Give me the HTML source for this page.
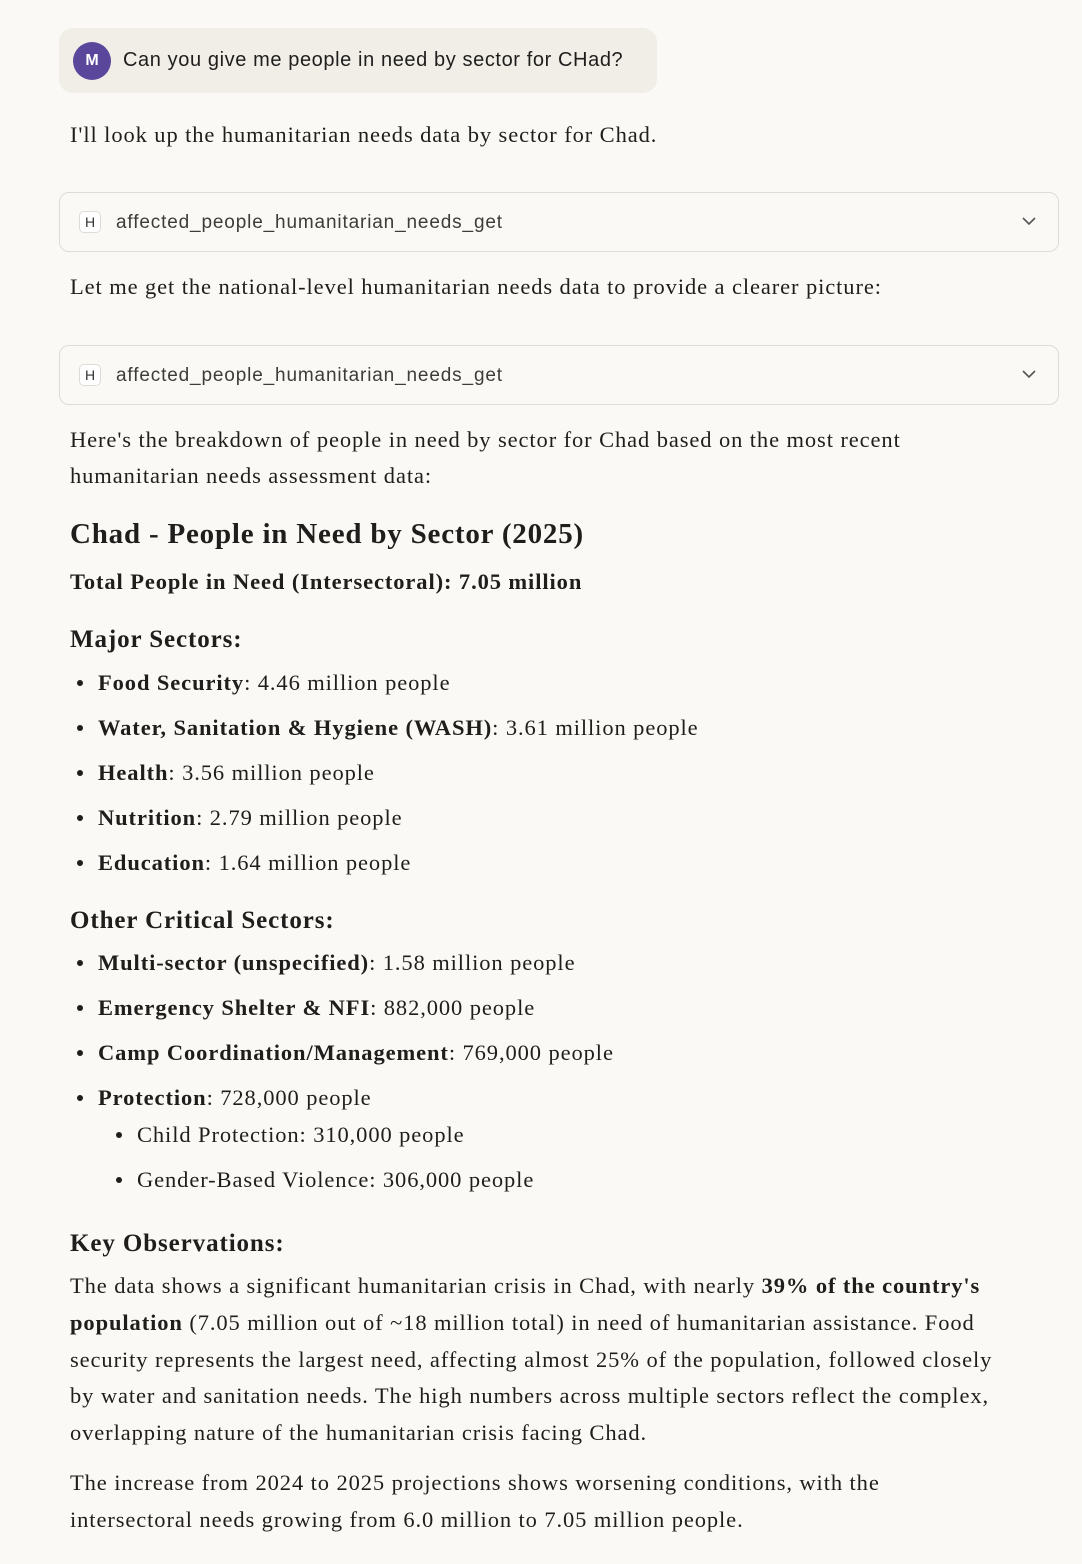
<!DOCTYPE html>
<html><head><meta charset="utf-8"><style>
body{margin:0;background:#faf9f5;width:1082px;height:1564px;position:relative;overflow:hidden;font-family:"Liberation Serif",serif;color:#1f1e1d;}
.a{position:absolute;left:70px;white-space:nowrap;font-size:22.5px;line-height:37px;letter-spacing:0.9px}
.bub{position:absolute;left:59px;top:28px;width:598px;height:65px;background:#f0eee6;border-radius:14px}
.av{position:absolute;left:14px;top:14px;width:38px;height:38px;border-radius:50%;background:#5a479b;color:#fff;font:bold 16px "Liberation Sans",sans-serif;text-align:center;line-height:38px}
.q{position:absolute;left:64px;top:21px;font:20px "Liberation Sans",sans-serif;color:#1f1e1d;letter-spacing:0.6px}
.tool{position:absolute;left:59px;width:998px;height:58px;border:1px solid #dedcd4;border-radius:10px;background:#faf9f5}
.h{position:absolute;left:19px;top:18px;width:20px;height:20px;border:1px solid #dedcd4;border-radius:5px;background:#fff;font:14px "Liberation Sans",sans-serif;text-align:center;line-height:20px;color:#333}
.tn{position:absolute;left:56px;top:19px;font:19px "Liberation Sans",sans-serif;color:#3d3c38;letter-spacing:0.85px}
.chev{position:absolute;right:20px;top:19px}
.li{position:absolute;left:98px;white-space:nowrap;font-size:22.5px;line-height:37px;letter-spacing:0.9px}
.li:before{content:"";position:absolute;left:-21px;top:16px;width:6px;height:6px;border-radius:50%;background:#1f1e1d}
.li2{left:137px}
</style></head><body>
<div class="bub"><div class="av">M</div><div class="q">Can you give me people in need by sector for CHad?</div></div>
<div class="a" style="top:116px">I'll look up the humanitarian needs data by sector for Chad.</div>
<div class="tool" style="top:192px"><div class="h">H</div><div class="tn">affected_people_humanitarian_needs_get</div><svg class="chev" width="18" height="18" viewBox="0 0 18 18"><path d="M3 6l6 6 6-6" fill="none" stroke="#555" stroke-width="1.6"/></svg></div>
<div class="a" style="top:268px">Let me get the national-level humanitarian needs data to provide a clearer picture:</div>
<div class="tool" style="top:345px"><div class="h">H</div><div class="tn">affected_people_humanitarian_needs_get</div><svg class="chev" width="18" height="18" viewBox="0 0 18 18"><path d="M3 6l6 6 6-6" fill="none" stroke="#555" stroke-width="1.6"/></svg></div>
<div class="a" style="top:421px">Here's the breakdown of people in need by sector for Chad based on the most recent</div>
<div class="a" style="top:457px">humanitarian needs assessment data:</div>
<div class="a" style="top:514px;font-size:29px;font-weight:bold;line-height:40px;letter-spacing:0.8px">Chad - People in Need by Sector (2025)</div>
<div class="a" style="top:563px;font-weight:bold">Total People in Need (Intersectoral): 7.05 million</div>
<div class="a" style="top:621px;font-size:25px;font-weight:bold">Major Sectors:</div>
<div class="li" style="top:664px"><b>Food Security</b>: 4.46 million people</div>
<div class="li" style="top:709px"><b>Water, Sanitation &amp; Hygiene (WASH)</b>: 3.61 million people</div>
<div class="li" style="top:754px"><b>Health</b>: 3.56 million people</div>
<div class="li" style="top:799px"><b>Nutrition</b>: 2.79 million people</div>
<div class="li" style="top:844px"><b>Education</b>: 1.64 million people</div>
<div class="a" style="top:902px;font-size:25px;font-weight:bold">Other Critical Sectors:</div>
<div class="li" style="top:944px"><b>Multi-sector (unspecified)</b>: 1.58 million people</div>
<div class="li" style="top:989px"><b>Emergency Shelter &amp; NFI</b>: 882,000 people</div>
<div class="li" style="top:1034px"><b>Camp Coordination/Management</b>: 769,000 people</div>
<div class="li" style="top:1079px"><b>Protection</b>: 728,000 people</div>
<div class="li li2" style="top:1116px">Child Protection: 310,000 people</div>
<div class="li li2" style="top:1161px">Gender-Based Violence: 306,000 people</div>
<div class="a" style="top:1225px;font-size:25px;font-weight:bold">Key Observations:</div>
<div class="a" style="top:1267px">The data shows a significant humanitarian crisis in Chad, with nearly <b>39% of the country's</b></div>
<div class="a" style="top:1304px"><b>population</b> (7.05 million out of ~18 million total) in need of humanitarian assistance. Food</div>
<div class="a" style="top:1341px">security represents the largest need, affecting almost 25% of the population, followed closely</div>
<div class="a" style="top:1377px">by water and sanitation needs. The high numbers across multiple sectors reflect the complex,</div>
<div class="a" style="top:1414px">overlapping nature of the humanitarian crisis facing Chad.</div>
<div class="a" style="top:1464px">The increase from 2024 to 2025 projections shows worsening conditions, with the</div>
<div class="a" style="top:1501px">intersectoral needs growing from 6.0 million to 7.05 million people.</div>
</body></html>
